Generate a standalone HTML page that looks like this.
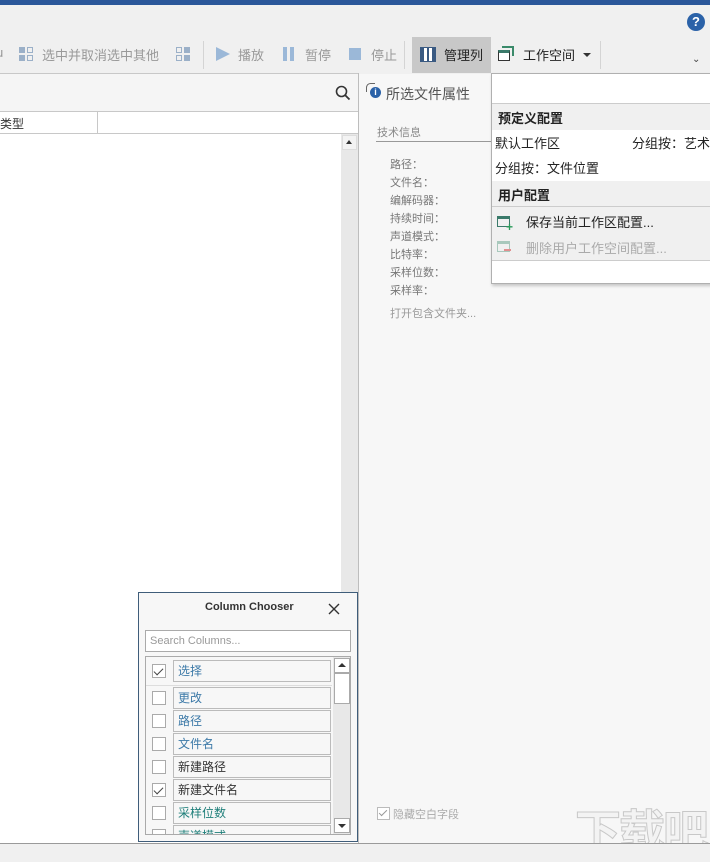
<!DOCTYPE html>
<html><head><meta charset="utf-8"><style>
*{box-sizing:border-box;margin:0;padding:0}
body{width:710px;height:858px;overflow:hidden;position:relative;background:#f0f0f0;font-family:"Liberation Sans","Noto Sans CJK SC",sans-serif;font-size:13px;color:#333}
.a{position:absolute}
.tb{color:#999;font-size:13px;top:45px}
.lbl{font-size:11px;color:#777}
.row{position:absolute;left:6px;width:186px;height:22px}
.cb{position:absolute;left:6px;top:4px;width:14px;height:14px;border:1px solid #aaa;background:#fff}
.cb.c::after{content:"";position:absolute;left:3px;top:1px;width:4px;height:8px;border:solid #444;border-width:0 1.5px 1.5px 0;transform:rotate(45deg)}
.lb{position:absolute;left:28px;top:0;width:158px;height:22px;border:1px solid #bbb;background:#f7f7f7;font-size:12px;line-height:20px;padding-left:4px;color:#3d7aa8}
</style></head><body>
<div class="a" style="left:0;top:0;width:710px;height:5px;background:#2b579a"></div>
<div class="a" style="left:687px;top:13px;width:18px;height:18px;border-radius:50%;background:#2b62a8;color:#fff;font-weight:bold;font-size:13px;text-align:center;line-height:18px">?</div>
<div class="a tb" style="left:-4px">u</div>
<div class="a" style="left:19px;top:47px;width:6px;height:6px;background:#9bb0c8"></div>
<div class="a" style="left:27px;top:47px;width:6px;height:6px;border:1px solid #9bb0c8"></div>
<div class="a" style="left:19px;top:55px;width:6px;height:6px;background:#9bb0c8"></div>
<div class="a" style="left:27px;top:55px;width:6px;height:6px;border:1px solid #9bb0c8"></div>
<div class="a tb" style="left:42px">选中并取消选中其他</div>
<div class="a" style="left:176px;top:47px;width:6px;height:6px;border:1px solid #9bb0c8"></div>
<div class="a" style="left:184px;top:47px;width:6px;height:6px;background:#9bb0c8"></div>
<div class="a" style="left:176px;top:55px;width:6px;height:6px;border:1px solid #9bb0c8"></div>
<div class="a" style="left:184px;top:55px;width:6px;height:6px;background:#9bb0c8"></div>
<div class="a" style="left:203px;top:41px;width:1px;height:28px;background:#d4d4d4"></div>
<div class="a" style="left:216px;top:47px;width:0;height:0;border-left:14px solid #9bb8d8;border-top:7px solid transparent;border-bottom:7px solid transparent"></div>
<div class="a tb" style="left:238px">播放</div>
<div class="a" style="left:283px;top:47px;width:4px;height:14px;background:#9bb8d8"></div>
<div class="a" style="left:290px;top:47px;width:4px;height:14px;background:#9bb8d8"></div>
<div class="a tb" style="left:305px">暂停</div>
<div class="a" style="left:349px;top:48px;width:12px;height:12px;background:#9bb8d8"></div>
<div class="a tb" style="left:371px">停止</div>
<div class="a" style="left:404px;top:41px;width:1px;height:28px;background:#d4d4d4"></div>
<div class="a" style="left:412px;top:37px;width:79px;height:36px;background:#c8c8c8"></div>
<div class="a" style="left:420px;top:47px;width:16px;height:15px;border:1px solid #3a5a82;background:linear-gradient(90deg,#3a5a82 0 3px,#fff 3px 6px,#3a5a82 6px 8px,#fff 8px 11px,#3a5a82 11px 14px)"></div>
<div class="a" style="left:444px;top:45px;color:#222">管理列</div>
<div class="a" style="left:502px;top:46px;width:12px;height:10px;border:2px solid #3a8a6a;border-bottom:none;border-left:none"></div>
<div class="a" style="left:498px;top:50px;width:12px;height:11px;border:1px solid #333;border-top:3px solid #3a7a6a;background:#fff"></div>
<div class="a" style="left:523px;top:45px;color:#222">工作空间</div>
<div class="a" style="left:583px;top:53px;border-top:4px solid #333;border-left:4px solid transparent;border-right:4px solid transparent"></div>
<div class="a" style="left:600px;top:41px;width:1px;height:28px;background:#d4d4d4"></div>
<div class="a" style="left:692px;top:54px;font-size:10px;color:#444">⌄</div>
<div class="a" style="left:0;top:73px;width:358px;height:770px;background:#fff;border-top:1px solid #c8c8c8"></div>
<div class="a" style="left:0;top:74px;width:358px;height:38px;background:#f5f5f5;border-bottom:1px solid #c8c8c8"></div>
<svg class="a" style="left:335px;top:85px" width="16" height="16"><circle cx="6.5" cy="6.5" r="5" fill="none" stroke="#333" stroke-width="1.6"/><line x1="10" y1="10" x2="14.5" y2="14.5" stroke="#333" stroke-width="1.8"/></svg>
<div class="a" style="left:0;top:112px;width:358px;height:22px;background:#fff;border-bottom:1px solid #c8c8c8"></div>
<div class="a" style="left:97px;top:112px;width:1px;height:21px;background:#c8c8c8"></div>
<div class="a" style="left:0;top:115px;font-size:12px;color:#333">类型</div>
<div class="a" style="left:341px;top:134px;width:17px;height:460px;background:#e8e8e8"></div>
<div class="a" style="left:342px;top:135px;width:15px;height:15px;background:#f3f3f3;border:1px solid #ddd"></div>
<div class="a" style="left:346px;top:140px;border-bottom:4px solid #333;border-left:3.5px solid transparent;border-right:3.5px solid transparent"></div>
<div class="a" style="left:358px;top:73px;width:1px;height:770px;background:#bdbdbd"></div>
<div class="a" style="left:359px;top:74px;width:351px;height:769px;background:#f7f7f7"></div>
<div class="a" style="left:366px;top:82px;width:18px;height:18px"><div class="a" style="left:4px;top:5px;width:11px;height:11px;border-radius:50%;background:#2b62a8;color:#fff;font-size:9px;font-weight:bold;text-align:center;line-height:11px">i</div><div class="a" style="left:0;top:1px;width:9px;height:9px;border:1.5px solid #666;border-right:none;border-bottom:none;border-radius:50% 0 0 0"></div></div>
<div class="a" style="left:386px;top:84px;font-size:14px;color:#555">所选文件属性</div>
<div class="a" style="left:377px;top:124px;font-size:11px;color:#888">技术信息</div>
<div class="a" style="left:376px;top:141px;width:116px;height:1px;background:#999"></div>
<div class="a lbl" style="left:390px;top:156px">路径：</div>
<div class="a lbl" style="left:390px;top:174px">文件名：</div>
<div class="a lbl" style="left:390px;top:192px">编解码器：</div>
<div class="a lbl" style="left:390px;top:210px">持续时间：</div>
<div class="a lbl" style="left:390px;top:228px">声道模式：</div>
<div class="a lbl" style="left:390px;top:246px">比特率：</div>
<div class="a lbl" style="left:390px;top:264px">采样位数：</div>
<div class="a lbl" style="left:390px;top:282px">采样率：</div>
<div class="a lbl" style="left:390px;top:305px;color:#999">打开包含文件夹...</div>
<div class="a" style="left:377px;top:807px;width:13px;height:13px;border:1px solid #bbb;background:#fff"></div>
<div class="a" style="left:381px;top:808px;width:4px;height:8px;border:solid #999;border-width:0 1.5px 1.5px 0;transform:rotate(45deg)"></div>
<div class="a" style="left:393px;top:806px;font-size:11px;color:#aaa">隐藏空白字段</div>
<div class="a" style="left:575px;top:796px;font-size:46px;color:#f3f3f3;-webkit-text-stroke:1px #c8c8c8;letter-spacing:-2px;font-weight:bold">下载吧</div>
<div class="a" style="left:491px;top:73px;width:222px;height:211px;background:#fff;border:1px solid #b0b0b0;box-shadow:1px 2px 3px rgba(0,0,0,.2)"></div>
<div class="a" style="left:492px;top:103px;width:218px;height:1px;background:#ccc"></div>
<div class="a" style="left:492px;top:104px;width:218px;height:26px;background:#f0f0f0"></div>
<div class="a" style="left:498px;top:108px;font-weight:bold;color:#222">预定义配置</div>
<div class="a" style="left:495px;top:133px;color:#222">默认工作区</div>
<div class="a" style="left:632px;top:133px;color:#222;white-space:nowrap">分组按：艺术</div>
<div class="a" style="left:495px;top:158px;color:#222">分组按：文件位置</div>
<div class="a" style="left:492px;top:181px;width:218px;height:26px;background:#f0f0f0;border-bottom:1px solid #ccc"></div>
<div class="a" style="left:498px;top:185px;font-weight:bold;color:#222">用户配置</div>
<div class="a" style="left:492px;top:207px;width:218px;height:54px;background:#f0f0f0;border-bottom:1px solid #ccc"></div>
<div class="a" style="left:497px;top:216px;width:13px;height:11px;border:1.5px solid #3a7a6a;border-top:3px solid #3a7a6a"></div>
<div class="a" style="left:506px;top:220px;color:#2a9a5a;font-weight:bold;font-size:12px">+</div>
<div class="a" style="left:526px;top:212px;color:#222">保存当前工作区配置...</div>
<div class="a" style="left:497px;top:241px;width:13px;height:11px;border:1.5px solid #a8c8bc;border-top:3px solid #a8c8bc"></div>
<div class="a" style="left:504px;top:249px;width:7px;height:2px;background:#e09090"></div>
<div class="a" style="left:526px;top:238px;color:#aaa">删除用户工作空间配置...</div>
<div class="a" style="left:138px;top:592px;width:220px;height:250px;background:#f7f7f7;border:1px solid #3f5d7a"></div>
<div class="a" style="left:205px;top:601px;font-size:11px;font-weight:bold;color:#333">Column Chooser</div>
<svg class="a" style="left:328px;top:603px" width="12" height="12"><path d="M1 1L11 11M11 1L1 11" stroke="#333" stroke-width="1.4"/></svg>
<div class="a" style="left:145px;top:630px;width:206px;height:22px;background:#fff;border:1px solid #aaa;font-size:11px;color:#999;line-height:20px;padding-left:4px">Search Columns...</div>
<div class="a" style="left:145px;top:656px;width:206px;height:179px;background:#f7f7f7;border:1px solid #aaa;overflow:hidden">
 <div class="row" style="top:3px;left:0"><div class="cb c"></div><div class="lb" style="left:27px">选择</div></div>
 <div class="a" style="left:0;top:28px;width:186px;height:1px;background:#ddd"></div>
 <div class="row" style="top:30px;left:0"><div class="cb"></div><div class="lb" style="left:27px">更改</div></div>
 <div class="row" style="top:53px;left:0"><div class="cb"></div><div class="lb" style="left:27px">路径</div></div>
 <div class="row" style="top:76px;left:0"><div class="cb"></div><div class="lb" style="left:27px">文件名</div></div>
 <div class="row" style="top:99px;left:0"><div class="cb"></div><div class="lb" style="left:27px;color:#333">新建路径</div></div>
 <div class="row" style="top:122px;left:0"><div class="cb c"></div><div class="lb" style="left:27px;color:#333">新建文件名</div></div>
 <div class="row" style="top:145px;left:0"><div class="cb"></div><div class="lb" style="left:27px;color:#1f7f7a">采样位数</div></div>
 <div class="row" style="top:168px;left:0"><div class="cb"></div><div class="lb" style="left:27px;color:#1f7f7a">声道模式</div></div>
 <div class="a" style="left:187px;top:0;width:18px;height:177px;background:#e8e8e8"></div>
 <div class="a" style="left:188px;top:1px;width:16px;height:15px;background:#fff;border:1px solid #aaa"></div>
 <div class="a" style="left:192px;top:6px;border-bottom:4px solid #333;border-left:4px solid transparent;border-right:4px solid transparent"></div>
 <div class="a" style="left:188px;top:16px;width:16px;height:31px;background:#fff;border:1px solid #aaa"></div>
 <div class="a" style="left:188px;top:161px;width:16px;height:15px;background:#fff;border:1px solid #aaa"></div>
 <div class="a" style="left:192px;top:167px;border-top:4px solid #333;border-left:4px solid transparent;border-right:4px solid transparent"></div>
</div>
<div class="a" style="left:0;top:843px;width:710px;height:15px;background:#f0f0f0;border-top:1px solid #9a9a9a"></div>
</body></html>
